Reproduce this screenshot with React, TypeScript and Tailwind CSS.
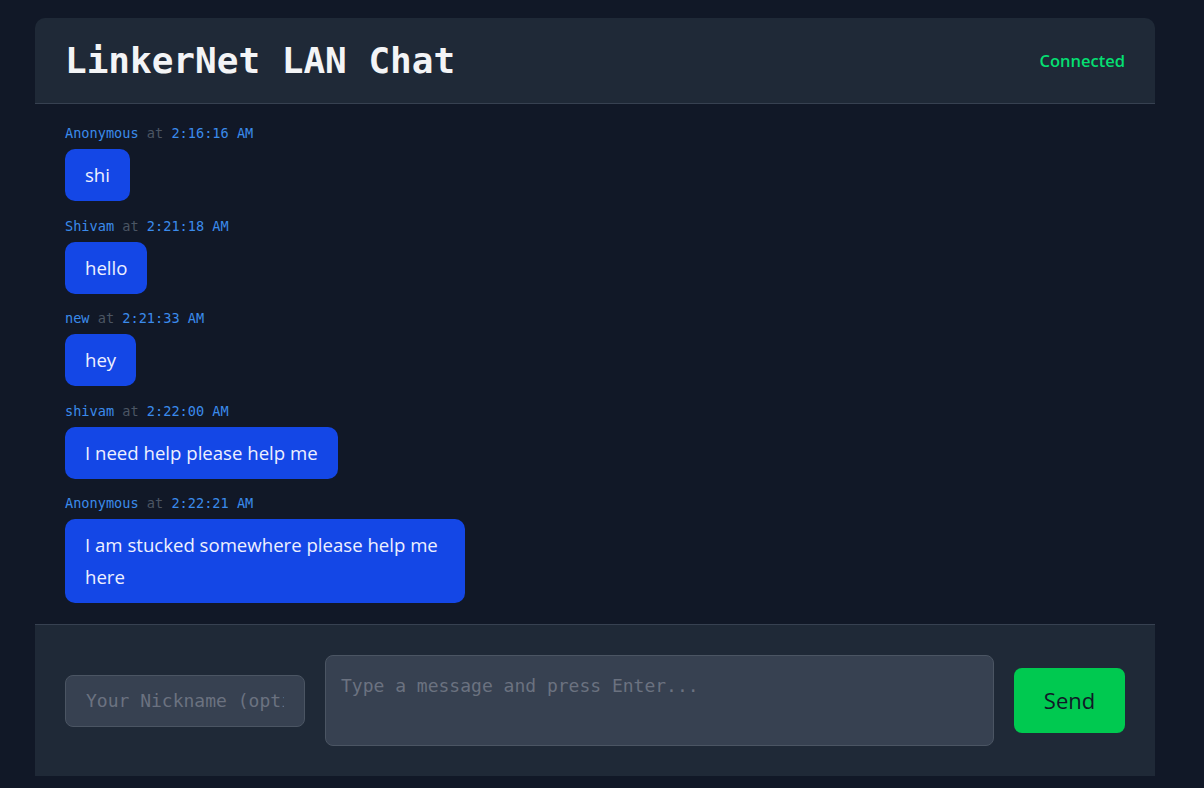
import React from 'react';

interface Message {
  name: string;
  time: string;
  text: string;
}

const messages: Message[] = [
  { name: 'Anonymous', time: '2:16:16 AM', text: 'shi' },
  { name: 'Shivam', time: '2:21:18 AM', text: 'hello' },
  { name: 'new', time: '2:21:33 AM', text: 'hey' },
  { name: 'shivam', time: '2:22:00 AM', text: 'I need help please help me' },
  { name: 'Anonymous', time: '2:22:21 AM', text: 'I am stucked somewhere please help me here' },
];

const mono = { fontFamily: '"DejaVu Sans Mono", "Liberation Mono", monospace' };

const ChatMessage: React.FC<{ msg: Message }> = ({ msg }) => (
  <div className="flex flex-col items-start">
    <div className="text-[13.6px] leading-[20px] font-['DejaVu_Sans_Mono',monospace]">
      <span className="text-[#3b8beb]">{msg.name}</span>
      <span className="text-[#4b5563]"> at </span>
      <span className="text-[#3b8beb]">{msg.time}</span>
    </div>
    <div className="mt-[6px] max-w-[400px] rounded-[10px] bg-[#1447e6] px-5 py-[10px] text-[18.6px] leading-[32px] text-[#eef0ff] font-['Open_Sans',sans-serif]">
      {msg.text}
    </div>
  </div>
);

export default function App() {
  return (
    <div className="min-h-screen bg-[#111827] pl-[35px] pt-[18px]">
      <div className="w-[1120px] overflow-hidden rounded-t-[10px]">
        <header className="flex items-center justify-between border-b border-[#374151] bg-[#1f2937] px-[30px] pt-[23px] pb-[22px]">
          <h1 className="text-[36px] font-bold leading-[40px] text-[#f3f4f6]" style={mono}>
            LinkerNet LAN Chat
          </h1>
          <span className="text-[16.5px] font-semibold text-[#05df72] font-['Open_Sans',sans-serif]">
            Connected
          </span>
        </header>

        <main className="flex flex-col gap-[14.5px] px-[30px] pt-[19px] pb-[21px]">
          {messages.map((m, i) => (
            <ChatMessage key={i} msg={m} />
          ))}
        </main>

        <footer className="flex items-center gap-5 border-t border-[#374151] bg-[#1f2937] px-[30px] py-[30px]">
          <input
            className="h-[52px] w-[240px] rounded-lg border border-[#4b5563] bg-[#374151] px-5 text-[18px] text-gray-100 outline-none placeholder:text-[#6b7280]"
            style={mono}
            placeholder="Your Nickname (optional)"
          />
          <textarea
            className="h-[91px] flex-1 resize-none rounded-lg border border-[#4b5563] bg-[#374151] px-[15px] py-[18px] text-[18px] leading-[24px] text-gray-100 outline-none placeholder:text-[#6b7280]"
            style={mono}
            placeholder="Type a message and press Enter..."
          />
          <button className="h-[65px] w-[111px] rounded-lg bg-[#00c950] text-[22px] text-[#111827] font-['Open_Sans',sans-serif]">
            Send
          </button>
        </footer>
      </div>
    </div>
  );
}
